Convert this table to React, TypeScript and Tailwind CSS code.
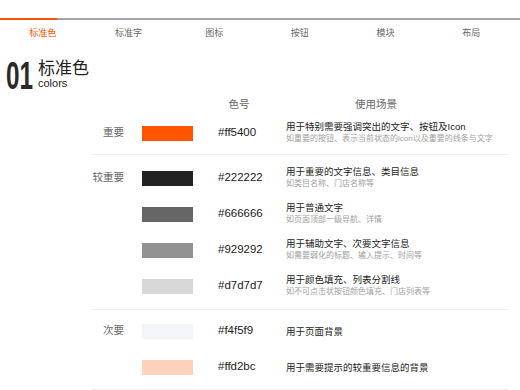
import React from "react";

const tabs = ["标准色", "标准字", "图标", "按钮", "模块", "布局"];

type Row = { color: string; hex: string; main: string; sub?: string; label?: string };

const groups: { rows: Row[]; pt: string; pb: string }[] = [
  {
    pt: "pt-[1px]",
    pb: "pb-[3px]",
    rows: [
      {
        label: "重要",
        color: "bg-[#ff5400]",
        hex: "#ff5400",
        main: "用于特别需要强调突出的文字、按钮及Icon",
        sub: "如重要的按钮、表示当前状态的icon以及重要的线条与文字",
      },
    ],
  },
  {
    pt: "pt-[5px]",
    pb: "pb-[5px]",
    rows: [
      {
        label: "较重要",
        color: "bg-[#222222]",
        hex: "#222222",
        main: "用于重要的文字信息、类目信息",
        sub: "如类目名称、门店名称等",
      },
      {
        color: "bg-[#666666]",
        hex: "#666666",
        main: "用于普通文字",
        sub: "如页面顶部一级导航、详情",
      },
      {
        color: "bg-[#929292]",
        hex: "#929292",
        main: "用于辅助文字、次要文字信息",
        sub: "如需要弱化的标题、输入提示、时间等",
      },
      {
        color: "bg-[#d7d7d7]",
        hex: "#d7d7d7",
        main: "用于颜色填充、列表分割线",
        sub: "如不可点击状按钮颜色填充、门店列表等",
      },
    ],
  },
  {
    pt: "pt-[3px]",
    pb: "pb-[4px]",
    rows: [
      { label: "次要", color: "bg-[#f4f5f9]", hex: "#f4f5f9", main: "用于页面背景" },
      { color: "bg-[#ffd2bc]", hex: "#ffd2bc", main: "用于需要提示的较重要信息的背景" },
    ],
  },
];

export default function App() {
  return (
    <div
      className="w-[520px] h-[390px] bg-white overflow-hidden"
      style={{ fontFamily: '"Liberation Sans", "Noto Sans CJK SC", sans-serif' }}
    >
      <div className="pt-[18px]">
        <div className="flex h-[2px]">
          <div className="w-[57px] bg-[#ff5400]" />
          <div className="flex-1 bg-[#a3a3a3]" />
        </div>
        <div className="grid grid-cols-6 w-[514px] h-[26px] items-center">
          {tabs.map((t, i) => (
            <div
              key={t}
              className={
                "text-center text-[9px] leading-[12px] " +
                (i === 0 ? "text-[#ff5400]" : "text-[#666666]")
              }
            >
              {t}
            </div>
          ))}
        </div>
      </div>

      <div className="mt-[11px] flex items-start pl-[6px] h-[38px]">
        <div className="w-[28px] h-[38px] relative">
          <span className="absolute left-0 top-0 origin-left scale-x-[0.64] text-[38px] leading-[38px] font-bold text-[#2a2a2a] whitespace-nowrap">
            01
          </span>
        </div>
        <div className="ml-[4px] mt-[4px] flex flex-col">
          <span className="text-[17px] leading-[16.5px] text-[#222222]">标准色</span>
          <span className="text-[11px] leading-[11px] text-[#222222]">colors</span>
        </div>
      </div>

      <div className="ml-[92px] w-[416px]">
        <div className="flex h-[19px] items-center text-[10.5px] text-[#666666]">
          <div className="w-[126px]" />
          <div className="w-[42px] text-center">色号</div>
          <div className="w-[26px]" />
          <div className="w-[180px] text-center">使用场景</div>
        </div>

        {groups.map((g, gi) => (
          <div key={gi} className={"border-b border-[#eeeeee] " + g.pt + " " + g.pb}>
            {g.rows.map((r) => (
              <div key={r.hex} className="flex h-[36px] items-center">
                <div className="w-[32px] text-right text-[10.5px] text-[#666666]">{r.label ?? ""}</div>
                <div className={"ml-[18px] w-[51px] h-[15px] " + r.color} />
                <div className="ml-[25px] w-[68px] text-[11.5px] text-[#222222]">{r.hex}</div>
                <div className={"flex flex-col whitespace-nowrap " + (r.sub ? "pb-[3px]" : "")}>
                  <span className="text-[9.5px] leading-[13px] text-[#222222]">{r.main}</span>
                  {r.sub && (
                    <span className="text-[8px] leading-[11px] text-[#a0a0a0]">{r.sub}</span>
                  )}
                </div>
              </div>
            ))}
          </div>
        ))}
      </div>
    </div>
  );
}
